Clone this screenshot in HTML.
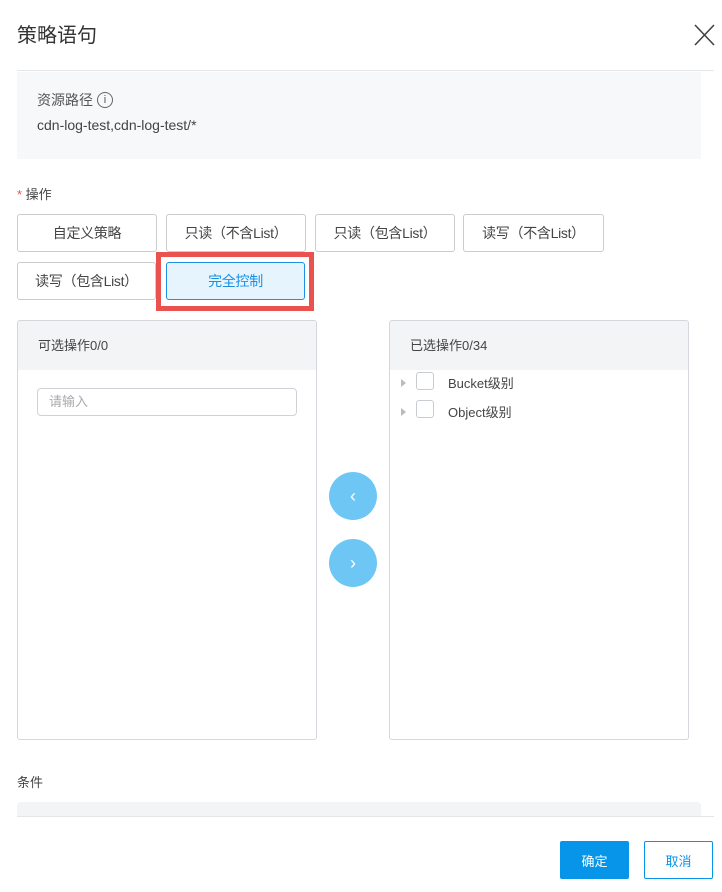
<!DOCTYPE html>
<html><head><meta charset="utf-8"><style>
*{box-sizing:border-box;margin:0;padding:0}
body{width:722px;height:892px;background:#fff;font-family:"Liberation Sans","Noto Sans CJK SC",sans-serif;color:#333;position:relative;overflow:hidden;font-size:13px}
.a{position:absolute}
.btn{position:absolute;height:38px;border:1px solid #ccc;border-radius:3px;background:#fff;font-size:14px;color:#444;display:flex;align-items:center;justify-content:center;letter-spacing:-0.3px}
.panel{position:absolute;top:320px;height:420px;border:1px solid #d4d7dc;border-radius:3px;overflow:hidden}
.ph{height:49px;background:#f3f4f6;padding-left:20px;line-height:49px;font-size:13px;color:#444}
.cb{position:absolute;width:18px;height:18px;border:1px solid #c8ccd2;border-radius:3px;background:#fff}
.tri{position:absolute;width:0;height:0;border-left:5px solid #bbb;border-top:4px solid transparent;border-bottom:4px solid transparent}
.circ{position:absolute;left:329px;width:48px;height:48px;border-radius:50%;background:#6ec6f5;color:#fff;font-size:18px;display:flex;align-items:center;justify-content:center}
</style></head><body>
<div class="a" style="left:17px;top:19px;font-size:20px;color:#333">策略语句</div>
<svg class="a" style="left:694px;top:24px" width="21" height="22"><path d="M1 1L20 21M20 1L1 21" stroke="#444" stroke-width="1.6" fill="none"/></svg>
<div class="a" style="left:17px;top:70px;width:697px;height:1px;background:#e4e6e9"></div>
<div class="a" style="left:17px;top:72px;width:684px;height:87px;background:#f7f8fa"></div>
<div class="a" style="left:37px;top:90px;font-size:14px;color:#555">资源路径</div>
<div class="a" style="left:97px;top:92px;width:16px;height:16px;border:1px solid #666;border-radius:50%;font-size:11px;line-height:14px;text-align:center;color:#555">i</div>
<div class="a" style="left:37px;top:117px;font-size:14px;color:#444">cdn-log-test,cdn-log-test/*</div>
<div class="a" style="left:17px;top:184px;font-size:13px;color:#444"><span style="color:#e9524f">*</span> 操作</div>
<div class="btn" style="left:17px;top:214px;width:140px">自定义策略</div>
<div class="btn" style="left:166px;top:214px;width:140px">只读（不含List）</div>
<div class="btn" style="left:315px;top:214px;width:140px">只读（包含List）</div>
<div class="btn" style="left:463px;top:214px;width:141px">读写（不含List）</div>
<div class="btn" style="left:17px;top:262px;width:139px">读写（包含List）</div>
<div class="a" style="left:156px;top:252px;width:158px;height:59px;border:5px solid #e9524f"></div>
<div class="btn" style="left:166px;top:262px;width:139px;background:#e6f4fd;border-color:#1e90e6;color:#1a8fe3">完全控制</div>
<div class="panel" style="left:17px;width:300px"><div class="ph">可选操作0/0</div>
<div class="a" style="left:19px;top:67px;width:260px;height:28px;border:1px solid #cfd3d8;border-radius:4px;padding-left:11px;line-height:26px;color:#aaa;font-size:13px">请输入</div></div>
<div class="panel" style="left:389px;width:300px"><div class="ph">已选操作0/34</div>
<div class="tri" style="left:11px;top:58px"></div><div class="cb" style="left:26px;top:51px"></div><div class="a" style="left:58px;top:52px;font-size:13px;color:#444">Bucket级别</div>
<div class="tri" style="left:11px;top:87px"></div><div class="cb" style="left:26px;top:79px"></div><div class="a" style="left:58px;top:81px;font-size:13px;color:#444">Object级别</div></div>
<div class="circ" style="top:472px">‹</div>
<div class="circ" style="top:539px">›</div>
<div class="a" style="left:17px;top:772px;font-size:13px;color:#444">条件</div>
<div class="a" style="left:17px;top:802px;width:684px;height:15px;background:#f3f4f6;border-radius:4px 4px 0 0"></div>
<div class="a" style="left:17px;top:816px;width:697px;height:1px;background:#e4e6e9"></div>
<div class="a" style="left:560px;top:841px;width:69px;height:38px;background:#0795ea;border-radius:2px;color:#fff;font-size:13px;display:flex;align-items:center;justify-content:center">确定</div>
<div class="a" style="left:644px;top:841px;width:69px;height:38px;border:1px solid #0795ea;border-radius:2px;color:#0795ea;font-size:13px;display:flex;align-items:center;justify-content:center">取消</div>
</body></html>
